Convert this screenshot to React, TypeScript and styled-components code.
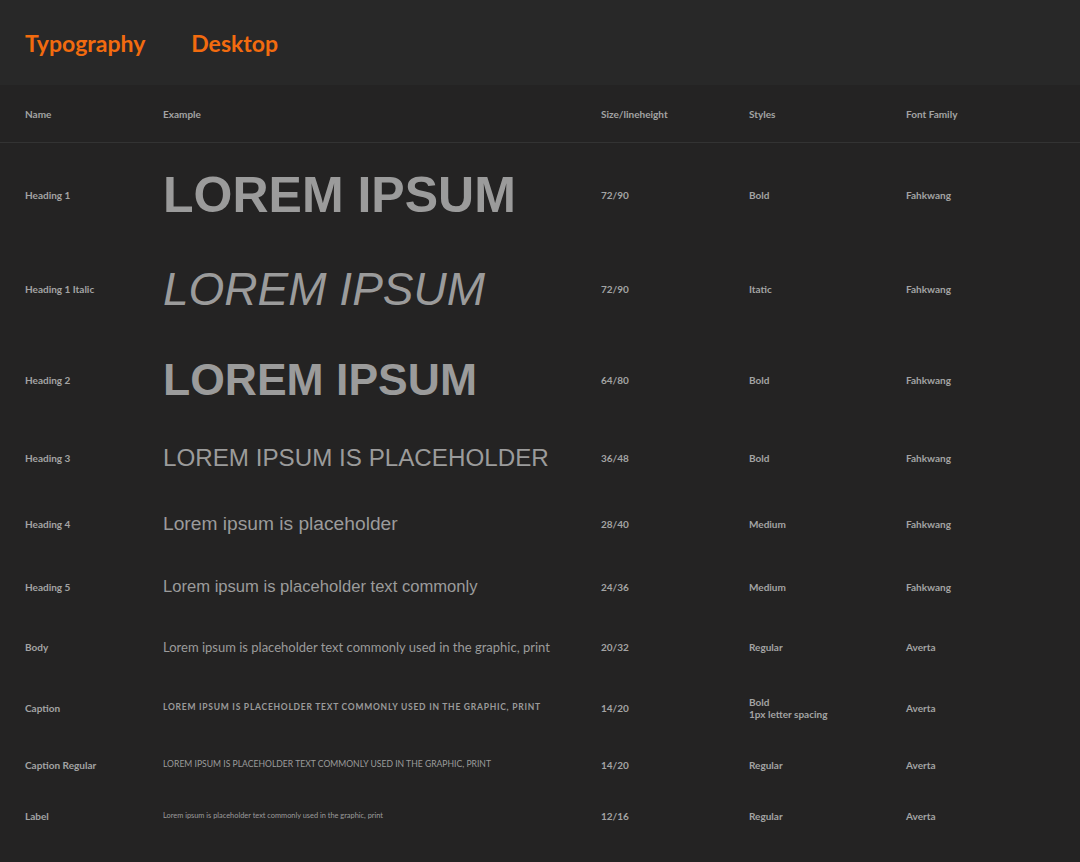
import styled, { createGlobalStyle } from "styled-components";

const Global = createGlobalStyle`
  body { margin: 0; background: #242323; font-family: Lato, "Noto Sans", sans-serif; }
`;

const Top = styled.header`
  height: 85px;
  background: #282828;
  display: flex;
  align-items: center;
  padding: 0 25px;
  gap: 46px;
  color: #f26b0f;
  font-family: Lato, sans-serif;
  font-weight: 700;
  font-size: 23px;
`;

const Grid = styled.div<{ $h: number; $border?: boolean }>`
  display: grid;
  grid-template-columns: 138px 438px 148px 157px 1fr;
  align-items: center;
  height: ${p => p.$h}px;
  padding-left: 25px;
  border-bottom: ${p => (p.$border ? "1px solid #333" : "none")};
  color: #a3a3a3;
  font-size: 10px;
  font-weight: 700;
  line-height: 12px;
`;

const Sample = styled.div<{ $size: number; $weight?: number; $italic?: boolean; $sans?: boolean; $ls?: number }>`
  font-family: ${p => (p.$sans ? "Lato, 'Noto Sans', sans-serif" : "'Liberation Sans', Arial, sans-serif")};
  font-size: ${p => p.$size}px;
  font-weight: ${p => p.$weight ?? 400};
  font-style: ${p => (p.$italic ? "italic" : "normal")};
  letter-spacing: ${p => p.$ls ?? 0}px;
  color: #9b9b9b;
  white-space: nowrap;
  line-height: 1.1;
`;

type Row = {
  name: string; h: number; text: string; size: string; style: string[]; family: string;
  s: { $size: number; $weight?: number; $italic?: boolean; $sans?: boolean; $ls?: number };
};

const rows: Row[] = [
  { name: "Heading 1", h: 104, text: "LOREM IPSUM", size: "72/90", style: ["Bold"], family: "Fahkwang", s: { $size: 50, $weight: 700 } },
  { name: "Heading 1 Italic", h: 84, text: "LOREM IPSUM", size: "72/90", style: ["Itatic"], family: "Fahkwang", s: { $size: 46, $italic: true } },
  { name: "Heading 2", h: 98, text: "LOREM IPSUM", size: "64/80", style: ["Bold"], family: "Fahkwang", s: { $size: 44.5, $weight: 700 } },
  { name: "Heading 3", h: 58, text: "LOREM IPSUM IS PLACEHOLDER", size: "36/48", style: ["Bold"], family: "Fahkwang", s: { $size: 24.2 } },
  { name: "Heading 4", h: 74, text: "Lorem ipsum is placeholder", size: "28/40", style: ["Medium"], family: "Fahkwang", s: { $size: 19.2 } },
  { name: "Heading 5", h: 52, text: "Lorem ipsum is placeholder text commonly", size: "24/36", style: ["Medium"], family: "Fahkwang", s: { $size: 16.6 } },
  { name: "Body", h: 68, text: "Lorem ipsum is placeholder text commonly used in the graphic, print", size: "20/32", style: ["Regular"], family: "Averta", s: { $size: 13, $sans: true } },
  { name: "Caption", h: 54, text: "LOREM IPSUM IS PLACEHOLDER TEXT COMMONLY USED IN THE GRAPHIC, PRINT", size: "14/20", style: ["Bold", "1px letter spacing"], family: "Averta", s: { $size: 8.5, $weight: 700, $sans: true, $ls: 0.75 } },
  { name: "Caption Regular", h: 60, text: "LOREM IPSUM IS PLACEHOLDER TEXT COMMONLY USED IN THE GRAPHIC, PRINT", size: "14/20", style: ["Regular"], family: "Averta", s: { $size: 8.6, $sans: true } },
  { name: "Label", h: 42, text: "Lorem ipsum is placeholder text commonly used in the graphic, print", size: "12/16", style: ["Regular"], family: "Averta", s: { $size: 7.4, $sans: true } },
];

export default function App() {
  return (
    <>
      <Global />
      <Top>
        <span>Typography</span>
        <span>Desktop</span>
      </Top>
      <Grid $h={57} $border>
        <div>Name</div><div>Example</div><div>Size/lineheight</div><div>Styles</div><div>Font Family</div>
      </Grid>
      {rows.map(r => (
        <Grid key={r.name} $h={r.h}>
          <div>{r.name}</div>
          <Sample {...r.s}>{r.text}</Sample>
          <div>{r.size}</div>
          <div>{r.style.map(s => <div key={s}>{s}</div>)}</div>
          <div>{r.family}</div>
        </Grid>
      ))}
    </>
  );
}
